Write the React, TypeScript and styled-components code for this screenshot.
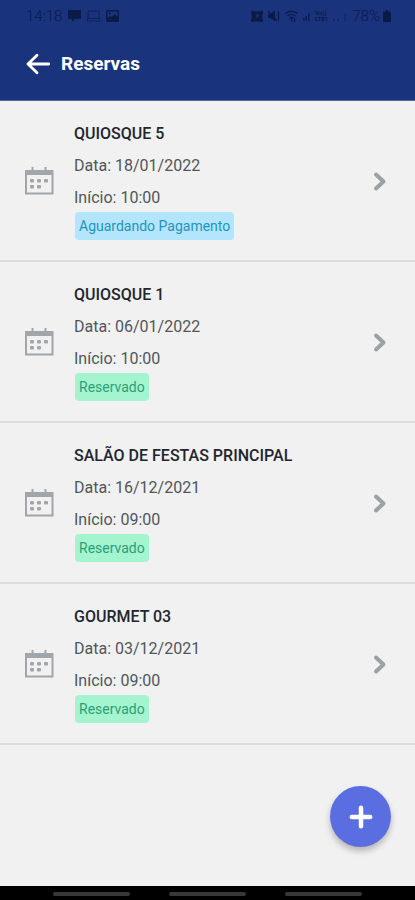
import React from "react";
import styled, { createGlobalStyle } from "styled-components";

const GlobalStyle = createGlobalStyle`
  *, *::before, *::after { box-sizing: border-box; }
  body {
    margin: 0;
    background: #f1f1f1;
    font-family: Roboto, "Liberation Sans", sans-serif;
  }
`;

const Screen = styled.div`
  display: flex;
  flex-direction: column;
  min-height: 100vh;
  background: #f1f1f1;
`;

const Header = styled.header`
  background: #19337c;
  border-bottom: 1px solid #5068a0;
`;

const StatusBar = styled.div`
  display: flex;
  align-items: center;
  justify-content: space-between;
  height: 32px;
  padding: 0 24px 0 26px;
  color: #0c1a48;
  font-size: 15px;
  line-height: 32px;
`;

const StatusGroup = styled.div<{ $gap: number }>`
  display: flex;
  align-items: center;
  gap: ${({ $gap }) => $gap}px;

  svg { display: block; }
`;

const Clock = styled.span`
  font-weight: 300;
`;

const Battery = styled.span`
  display: flex;
  align-items: center;
  gap: 3px;
  font-weight: 300;
`;

const Network = styled.span`
  display: flex;
  flex-direction: column;
  font-size: 6px;
  font-weight: 700;
  line-height: 6px;
`;

const TitleBar = styled.div`
  display: flex;
  align-items: center;
  gap: 10px;
  height: 68px;
  padding: 0 25px 4px;
`;

const BackButton = styled.button`
  display: flex;
  padding: 0;
  border: 0;
  background: none;
  color: #fff;
  cursor: pointer;
`;

const PageTitle = styled.h1`
  margin: 0;
  color: #fff;
  font-size: 19px;
  font-weight: 700;
  line-height: 24px;
`;

const Main = styled.main`
  position: relative;
  flex: 1;
`;

const List = styled.ul`
  margin: 0;
  padding: 0;
  list-style: none;
`;

const Item = styled.li`
  border-bottom: 2px solid #dcdede;
`;

const ItemLink = styled.a`
  display: grid;
  grid-template-columns: 30px 1fr 14px;
  align-items: center;
  column-gap: 20px;
  padding: 17px 28px 20px 24px;
  color: #50565b;
  text-decoration: none;

  > svg { margin-top: 3px; }
`;

const Details = styled.div`
  display: flex;
  flex-direction: column;
  align-items: flex-start;
`;

const Name = styled.h2`
  margin: 0;
  color: #23262d;
  font-size: 16px;
  font-weight: 500;
  line-height: 32px;
`;

const Line = styled.p`
  margin: 0;
  font-size: 16px;
  line-height: 32px;
`;

type Status = "pending" | "reserved";

const badgeColors: Record<Status, { background: string; text: string }> = {
  pending: { background: "#b3e5fd", text: "#2494bd" },
  reserved: { background: "#a4f4d0", text: "#2d9f77" },
};

const Badge = styled.span<{ $status: Status }>`
  padding: 0 4px;
  margin-left: 1px;
  margin-top: -2px;
  border-radius: 4px;
  background: ${({ $status }) => badgeColors[$status].background};
  color: ${({ $status }) => badgeColors[$status].text};
  font-size: 14px;
  line-height: 28px;
`;

const AddButton = styled.button`
  position: absolute;
  right: 24px;
  bottom: 39px;
  display: flex;
  align-items: center;
  justify-content: center;
  width: 61px;
  height: 61px;
  padding: 0;
  border: 0;
  border-radius: 50%;
  background: #5b6ee1;
  color: #fff;
  box-shadow: 0 4px 6px rgba(0, 0, 0, 0.25);
  cursor: pointer;
`;

const NavBar = styled.footer`
  display: flex;
  justify-content: center;
  gap: 39px;
  height: 14px;
  padding: 6px 0 4px;
  background: #000;
`;

const NavHandle = styled.span`
  width: 77px;
  border-radius: 2px;
  background: #383838;
`;

const ChatIcon = () => (
  <svg width="13" height="12" viewBox="0 0 13 12" fill="currentColor" aria-hidden="true">
    <path d="M1 0h11a1 1 0 0 1 1 1v7a1 1 0 0 1-1 1H7l-3 3V9H1a1 1 0 0 1-1-1V1a1 1 0 0 1 1-1z" />
  </svg>
);

const LaptopIcon = () => (
  <svg width="13" height="12" viewBox="0 0 13 12" fill="none" stroke="currentColor" opacity="0.75" aria-hidden="true">
    <rect x="1" y="1" width="11" height="7.5" rx="1" />
    <path d="M0 11h13M.5 8v3M12.5 8v3" />
  </svg>
);

const ImageIcon = () => (
  <svg width="13" height="12" viewBox="0 0 13 12" aria-hidden="true">
    <rect x="0.75" y="0.75" width="11.5" height="10.5" rx="1" fill="none" stroke="currentColor" strokeWidth="1.5" />
    <path d="M1 11V8l3-2 2 1 3-3 3 3v4z" fill="currentColor" />
    <circle cx="3.8" cy="3.6" r="1" fill="currentColor" />
  </svg>
);

const AlarmIcon = () => (
  <svg width="12" height="12" viewBox="0 0 12 12" aria-hidden="true">
    <path d="M0 1h3l1 .5h4L9 1h3v3l-.7 1v4l.7 1v2H9.500l-1-.5h-5l-1 .5H0v-2l.7-1V5L0 4z" fill="currentColor" />
    <path d="M6 4v3l2-2" fill="none" stroke="#19337c" strokeWidth="1.2" />
  </svg>
);

const MuteIcon = () => (
  <svg width="12" height="12" viewBox="0 0 12 12" aria-hidden="true">
    <path d="M0 4h2.500L7 .5v11L2.500 8H0z" fill="currentColor" />
    <path d="M0 1l9 10M10.500 1.500v9" fill="none" stroke="currentColor" strokeWidth="1.3" />
  </svg>
);

const WifiIcon = () => (
  <svg width="13" height="12" viewBox="0 0 13 12" fill="none" stroke="currentColor" strokeWidth="1.300" aria-hidden="true">
    <path d="M.5 3.500C4 .5 9 .5 12.500 3.500M2.500 6c2.500-2 5.500-2 8 0M4.500 8.300c1.300-1 2.700-1 4 0" />
    <path d="M6.500 9v2.500M9.500 8v4" />
  </svg>
);

const SignalIcon = () => (
  <svg width="7" height="10" viewBox="0 0 7 10" fill="currentColor" opacity="0.8" aria-hidden="true">
    <path d="M0 7h1.500v3H0zM2.500 5H4v5H2.500zM5 2h1.500v8H5z" />
  </svg>
);

const WeakSignalIcon = () => (
  <svg width="14" height="10" viewBox="0 0 14 10" fill="currentColor" opacity="0.6" aria-hidden="true">
    <path d="M0 8.500h2V10H0zM4 8.500h2V10H4zM11.500 2h1v8h-1z" />
  </svg>
);

const BatteryIcon = () => (
  <svg width="8" height="12" viewBox="0 0 8 12" fill="currentColor" aria-hidden="true">
    <path d="M2.500 0h3v1.500H7a1 1 0 0 1 1 1V11a1 1 0 0 1-1 1H1a1 1 0 0 1-1-1V2.500a1 1 0 0 1 1-1h1.500z" />
  </svg>
);

const BackIcon = () => (
  <svg width="26" height="22" viewBox="0 0 26 22" fill="none" stroke="currentColor" strokeWidth="2.800" strokeLinecap="round" strokeLinejoin="round" aria-hidden="true">
    <path d="M12 2.300L3 11l9 8.700M3 11h20.700" />
  </svg>
);

const CalendarIcon = () => (
  <svg width="30" height="30" viewBox="0 0 30 30" fill="#a0a6a9" aria-hidden="true">
    <path d="M7.500 1h2v4h-2zM20.500 1h2v4h-2z" />
    <path fillRule="evenodd" d="M1 4h28.500v24.500H1zM3 9v17.500h24.500V9z" />
    <rect x="6" y="13" width="4" height="3.500" rx="1" />
    <rect x="13" y="13" width="4" height="3.500" rx="1" />
    <rect x="20" y="13" width="4" height="3.500" rx="1" />
    <rect x="6" y="19" width="4" height="3.500" rx="1" />
    <rect x="13" y="19" width="4" height="3.500" rx="1" />
  </svg>
);

const ChevronIcon = () => (
  <svg width="14" height="22" viewBox="0 0 14 22" fill="none" stroke="#9ca1a3" strokeWidth="4" strokeLinecap="round" strokeLinejoin="round" aria-hidden="true">
    <path d="M3 4.500l7.500 7L3 18.500" />
  </svg>
);

const PlusIcon = () => (
  <svg width="24" height="24" viewBox="0 0 24 24" fill="none" stroke="currentColor" strokeWidth="4.500" strokeLinecap="round" aria-hidden="true">
    <path d="M12 2.800v18.400M2.800 12h18.400" />
  </svg>
);

interface Reservation {
  name: string;
  date: string;
  start: string;
  status: Status;
  label: string;
}

const reservations: Reservation[] = [
  { name: "QUIOSQUE 5", date: "18/01/2022", start: "10:00", status: "pending", label: "Aguardando Pagamento" },
  { name: "QUIOSQUE 1", date: "06/01/2022", start: "10:00", status: "reserved", label: "Reservado" },
  { name: "SALÃO DE FESTAS PRINCIPAL", date: "16/12/2021", start: "09:00", status: "reserved", label: "Reservado" },
  { name: "GOURMET 03", date: "03/12/2021", start: "09:00", status: "reserved", label: "Reservado" },
];

export default function App() {
  return (
    <Screen>
      <GlobalStyle />
      <Header>
        <StatusBar>
          <StatusGroup $gap={6}>
            <Clock>14:18</Clock>
            <ChatIcon />
            <LaptopIcon />
            <ImageIcon />
          </StatusGroup>
          <StatusGroup $gap={5}>
            <AlarmIcon />
            <MuteIcon />
            <WifiIcon />
            <SignalIcon />
            <Network>
              <span>Vo))</span>
              <span>LTE1</span>
            </Network>
            <WeakSignalIcon />
            <Battery>
              78%
              <BatteryIcon />
            </Battery>
          </StatusGroup>
        </StatusBar>
        <TitleBar>
          <BackButton type="button" aria-label="Voltar">
            <BackIcon />
          </BackButton>
          <PageTitle>Reservas</PageTitle>
        </TitleBar>
      </Header>
      <Main>
        <List>
          {reservations.map((item) => (
            <Item key={item.name}>
              <ItemLink href="#">
                <CalendarIcon />
                <Details>
                  <Name>{item.name}</Name>
                  <Line>Data: {item.date}</Line>
                  <Line>Início: {item.start}</Line>
                  <Badge $status={item.status}>{item.label}</Badge>
                </Details>
                <ChevronIcon />
              </ItemLink>
            </Item>
          ))}
        </List>
        <AddButton type="button" aria-label="Nova reserva">
          <PlusIcon />
        </AddButton>
      </Main>
      <NavBar>
        <NavHandle />
        <NavHandle />
        <NavHandle />
      </NavBar>
    </Screen>
  );
}
